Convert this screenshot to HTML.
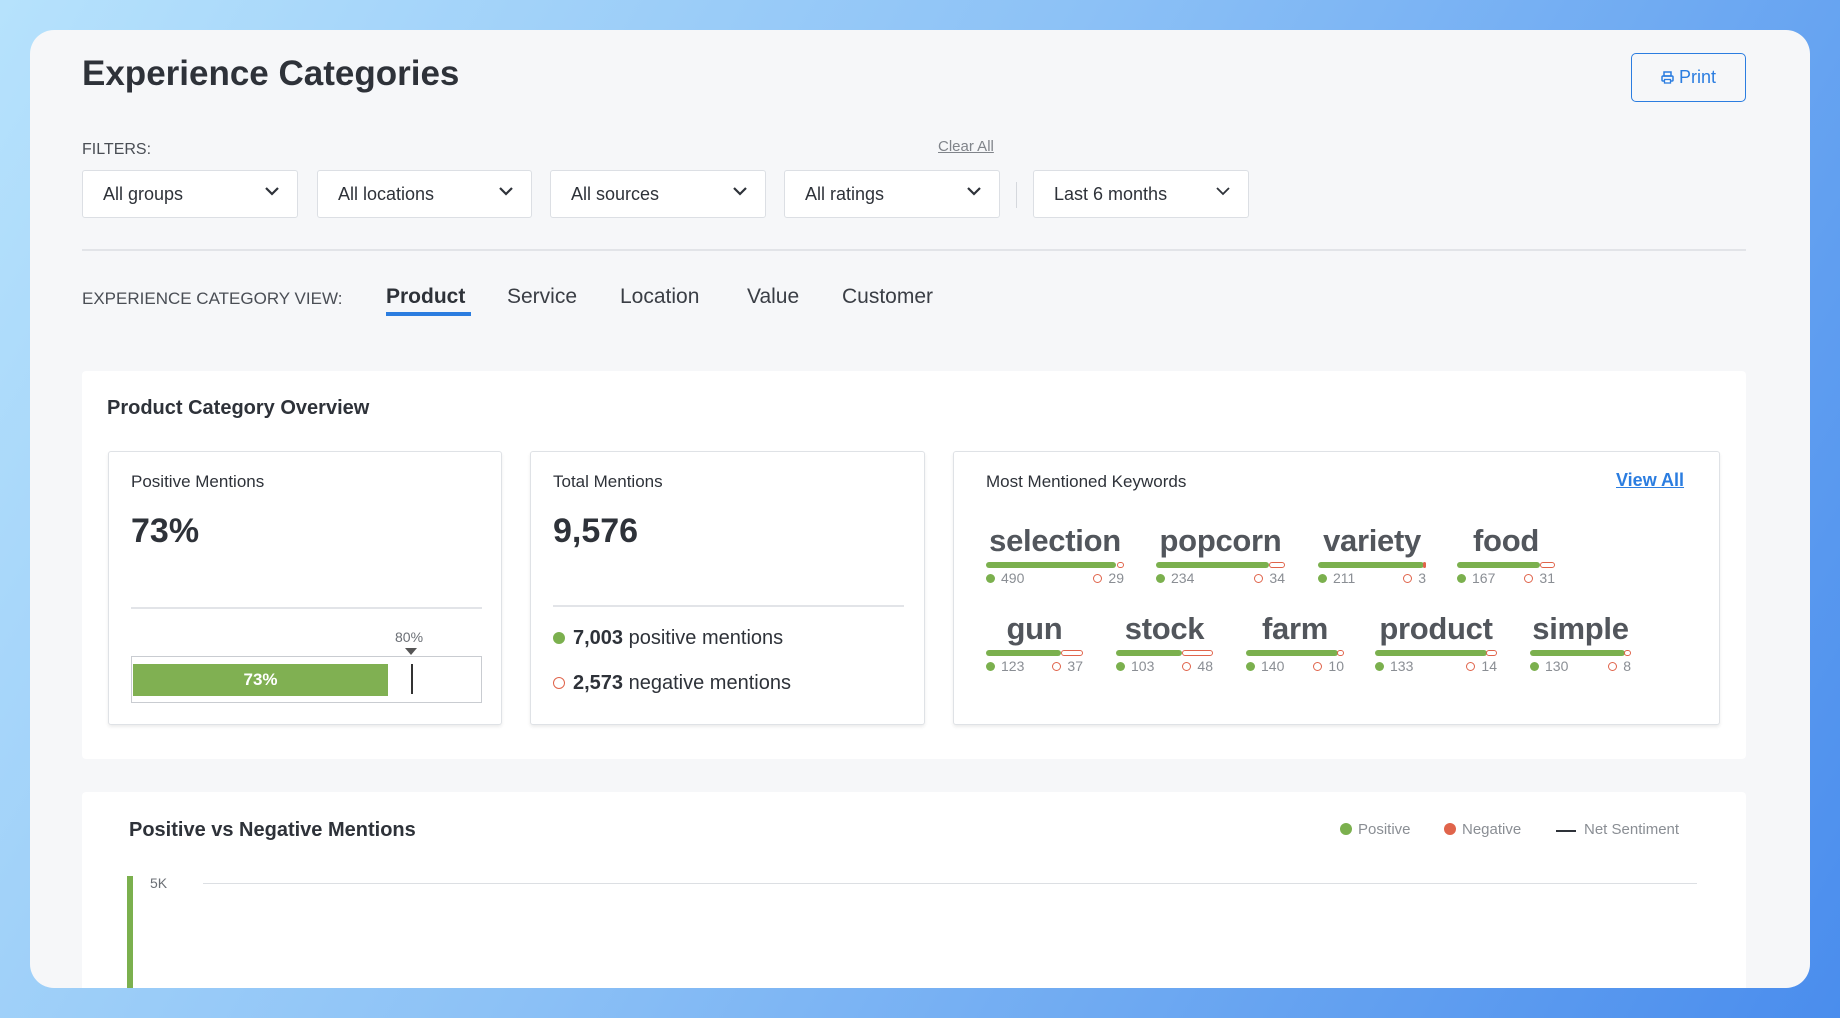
<!DOCTYPE html>
<html><head><meta charset="utf-8"><style>
*{box-sizing:border-box;margin:0;padding:0}
body{width:1840px;height:1018px;overflow:hidden;font-family:"Liberation Sans",sans-serif;color:#2e3239;background:linear-gradient(120deg,#b6e2fc 0%,#8cc1f6 45%,#4a8ded 100%);position:relative}
.card{position:absolute;left:30px;top:30px;width:1780px;height:958px;background:#f6f7f9;border-radius:24px;overflow:hidden}
.a{position:absolute}
.dd{position:absolute;top:140px;height:48px;background:#fff;border:1px solid #dcdfe4;border-radius:3px;font-size:18px;padding:0 20px;line-height:46px;color:#2e3239}
.dd svg{position:absolute;right:18px;top:16px}
.tab{position:absolute;top:255px;font-size:21px;color:#3a3e45}
.panel{position:absolute;background:#fff;border-radius:4px}
.box{position:absolute;top:421px;height:274px;background:#fff;border:1px solid #dfe2e6;border-radius:3px;box-shadow:0 2px 3px rgba(0,0,0,.08)}
.lbl{font-size:17px;color:#2e3239}
.big{font-size:34px;color:#2e3239;font-weight:bold}
.kw{position:absolute}
.kw .w{font-size:31px;font-weight:bold;color:#52565c;text-align:center;line-height:34px;letter-spacing:-0.3px}
.kw .bar{position:relative;height:6px;margin-top:4px}
.kw .g{position:absolute;left:0;top:0;height:6px;background:#7bb04e;border-radius:3px}
.kw .r{position:absolute;right:0;top:0;height:6px;border:1.5px solid #e0644b;border-radius:3px;background:#fff}
.kw .n{position:relative;height:16px;font-size:14px;color:#8a8e94;margin-top:2px}
.gd{display:inline-block;width:9px;height:9px;border-radius:50%;background:#7bb04e;margin-right:6px}
.rd{display:inline-block;width:9px;height:9px;border-radius:50%;border:1.5px solid #e0644b;margin-right:6px}
</style></head><body>
<div class="card">
<div class="a" style="left:52px;top:24px;font-size:35px;font-weight:bold;color:#2e3239">Experience Categories</div>
<div class="a" style="left:1601px;top:23px;width:115px;height:49px;border:1.5px solid #2b7de0;border-radius:5px;color:#2b7de0;font-size:18px;line-height:46px;text-align:center"><svg width="13" height="13" viewBox="0 0 13 13" style="vertical-align:-1px"><rect x="3" y="1" width="7" height="4" fill="none" stroke="#2b7de0" stroke-width="1.5"/><rect x="1" y="5" width="11" height="5" rx="1" fill="none" stroke="#2b7de0" stroke-width="1.5"/><rect x="3.5" y="8.5" width="6" height="3.5" fill="#fff" stroke="#2b7de0" stroke-width="1.3"/></svg> Print</div>
<div class="a" style="left:52px;top:111px;font-size:16px;color:#4a4e55">FILTERS:</div>
<div class="a" style="left:908px;top:108px;font-size:15px;color:#80848a;text-decoration:underline">Clear All</div>
<div class="dd" style="left:52px;width:216px">All groups<svg width="14" height="9"><path d="M1 1L7 7L13 1" fill="none" stroke="#2e3239" stroke-width="2.2"/></svg></div>
<div class="dd" style="left:287px;width:215px">All locations<svg width="14" height="9"><path d="M1 1L7 7L13 1" fill="none" stroke="#2e3239" stroke-width="2.2"/></svg></div>
<div class="dd" style="left:520px;width:216px">All sources<svg width="14" height="9"><path d="M1 1L7 7L13 1" fill="none" stroke="#2e3239" stroke-width="2.2"/></svg></div>
<div class="dd" style="left:754px;width:216px">All ratings<svg width="14" height="9"><path d="M1 1L7 7L13 1" fill="none" stroke="#2e3239" stroke-width="2.2"/></svg></div>
<div class="a" style="left:986px;top:152px;width:1px;height:26px;background:#d5d8dd"></div>
<div class="dd" style="left:1003px;width:216px">Last 6 months<svg width="14" height="9"><path d="M1 1L7 7L13 1" fill="none" stroke="#2e3239" stroke-width="1.8"/></svg></div>
<div class="a" style="left:52px;top:219px;width:1664px;height:2px;background:#e2e4e8"></div>
<div class="a" style="left:52px;top:259px;font-size:17px;color:#4a4e55">EXPERIENCE CATEGORY VIEW:</div>
<div class="tab" style="left:356px;font-weight:bold;color:#2e3239">Product</div>
<div class="a" style="left:356px;top:282px;width:85px;height:4px;background:#2b7de0"></div>
<div class="tab" style="left:477px">Service</div>
<div class="tab" style="left:590px">Location</div>
<div class="tab" style="left:717px">Value</div>
<div class="tab" style="left:812px">Customer</div>

<div class="panel" style="left:52px;top:341px;width:1664px;height:388px"></div>
<div class="a" style="left:77px;top:367px;font-size:20px;font-weight:bold">Product Category Overview</div>

<div class="box" style="left:78px;width:394px">
 <div class="a lbl" style="left:22px;top:20px">Positive Mentions</div>
 <div class="a big" style="left:22px;top:60px">73%</div>
 <div class="a" style="left:22px;top:155px;width:351px;height:2px;background:#e2e4e8"></div>
 <div class="a" style="left:286px;top:177px;font-size:14px;color:#6b6f75">80%</div>
 <svg class="a" style="left:296px;top:196px" width="12" height="8"><path d="M0 0H12L6 7Z" fill="#555"/></svg>
 <div class="a" style="left:22px;top:204px;width:351px;height:47px;border:1px solid #c9ccd1"></div>
 <div class="a" style="left:24px;top:212px;width:255px;height:32px;background:#80b052;color:#fff;font-size:17px;font-weight:bold;text-align:center;line-height:32px">73%</div>
 <div class="a" style="left:302px;top:212px;width:2px;height:30px;background:#333"></div>
</div>

<div class="box" style="left:500px;width:395px">
 <div class="a lbl" style="left:22px;top:20px">Total Mentions</div>
 <div class="a big" style="left:22px;top:60px">9,576</div>
 <div class="a" style="left:22px;top:153px;width:351px;height:2px;background:#e2e4e8"></div>
 <div class="a" style="left:22px;top:175px;font-size:20px"><span class="gd" style="width:12px;height:12px;margin-right:8px"></span><b>7,003</b> positive mentions</div>
 <div class="a" style="left:22px;top:220px;font-size:20px"><span class="rd" style="width:12px;height:12px;margin-right:8px"></span><b>2,573</b> negative mentions</div>
</div>

<div class="box" style="left:923px;width:767px">
 <div class="a lbl" style="left:32px;top:20px">Most Mentioned Keywords</div>
 <div class="a" style="left:662px;top:18px;font-size:18px;color:#2b7de0;text-decoration:underline;font-weight:bold">View All</div>
</div>

<div class="kw" style="left:956px;top:494px;width:138px"><div class="w">selection</div><div class="bar"><div class="g" style="width:130px"></div><div class="r" style="width:7px"></div></div><div class="n"><span class="gd"></span>490<span style="position:absolute;right:0"><span class="rd"></span>29</span></div></div>
<div class="kw" style="left:1126px;top:494px;width:129px"><div class="w">popcorn</div><div class="bar"><div class="g" style="width:113px"></div><div class="r" style="width:16px"></div></div><div class="n"><span class="gd"></span>234<span style="position:absolute;right:0"><span class="rd"></span>34</span></div></div>
<div class="kw" style="left:1288px;top:494px;width:108px"><div class="w">variety</div><div class="bar"><div class="g" style="width:106px"></div><div class="r" style="width:3px;background:#e0644b"></div></div><div class="n"><span class="gd"></span>211<span style="position:absolute;right:0"><span class="rd"></span>3</span></div></div>
<div class="kw" style="left:1427px;top:494px;width:98px"><div class="w">food</div><div class="bar"><div class="g" style="width:83px"></div><div class="r" style="width:15px"></div></div><div class="n"><span class="gd"></span>167<span style="position:absolute;right:0"><span class="rd"></span>31</span></div></div>
<div class="kw" style="left:956px;top:582px;width:97px"><div class="w">gun</div><div class="bar"><div class="g" style="width:75px"></div><div class="r" style="width:22px"></div></div><div class="n"><span class="gd"></span>123<span style="position:absolute;right:0"><span class="rd"></span>37</span></div></div>
<div class="kw" style="left:1086px;top:582px;width:97px"><div class="w">stock</div><div class="bar"><div class="g" style="width:66px"></div><div class="r" style="width:31px"></div></div><div class="n"><span class="gd"></span>103<span style="position:absolute;right:0"><span class="rd"></span>48</span></div></div>
<div class="kw" style="left:1216px;top:582px;width:98px"><div class="w">farm</div><div class="bar"><div class="g" style="width:92px"></div><div class="r" style="width:7px"></div></div><div class="n"><span class="gd"></span>140<span style="position:absolute;right:0"><span class="rd"></span>10</span></div></div>
<div class="kw" style="left:1345px;top:582px;width:122px"><div class="w">product</div><div class="bar"><div class="g" style="width:112px"></div><div class="r" style="width:11px"></div></div><div class="n"><span class="gd"></span>133<span style="position:absolute;right:0"><span class="rd"></span>14</span></div></div>
<div class="kw" style="left:1500px;top:582px;width:101px"><div class="w">simple</div><div class="bar"><div class="g" style="width:95px"></div><div class="r" style="width:7px"></div></div><div class="n"><span class="gd"></span>130<span style="position:absolute;right:0"><span class="rd"></span>8</span></div></div>

<div class="panel" style="left:52px;top:762px;width:1664px;height:196px;border-radius:4px 4px 0 0"></div>
<div class="a" style="left:99px;top:789px;font-size:20px;font-weight:bold">Positive vs Negative Mentions</div>
<div class="a" style="left:1310px;top:791px;font-size:15px;color:#8a8e94"><span class="gd" style="width:12px;height:12px;vertical-align:-1px"></span>Positive</div>
<div class="a" style="left:1414px;top:791px;font-size:15px;color:#8a8e94"><span class="gd" style="width:12px;height:12px;vertical-align:-1px;background:#e0644b"></span>Negative</div>
<div class="a" style="left:1526px;top:800px;width:20px;height:2px;background:#2e3239"></div>
<div class="a" style="left:1554px;top:791px;font-size:15px;color:#8a8e94">Net Sentiment</div>
<div class="a" style="left:120px;top:845px;font-size:14px;color:#6b6f75">5K</div>
<div class="a" style="left:173px;top:853px;width:1494px;height:1px;background:#dcdfe3"></div>
<div class="a" style="left:97px;top:846px;width:6px;height:112px;background:#7bb04e"></div>
</div>
</body></html>
